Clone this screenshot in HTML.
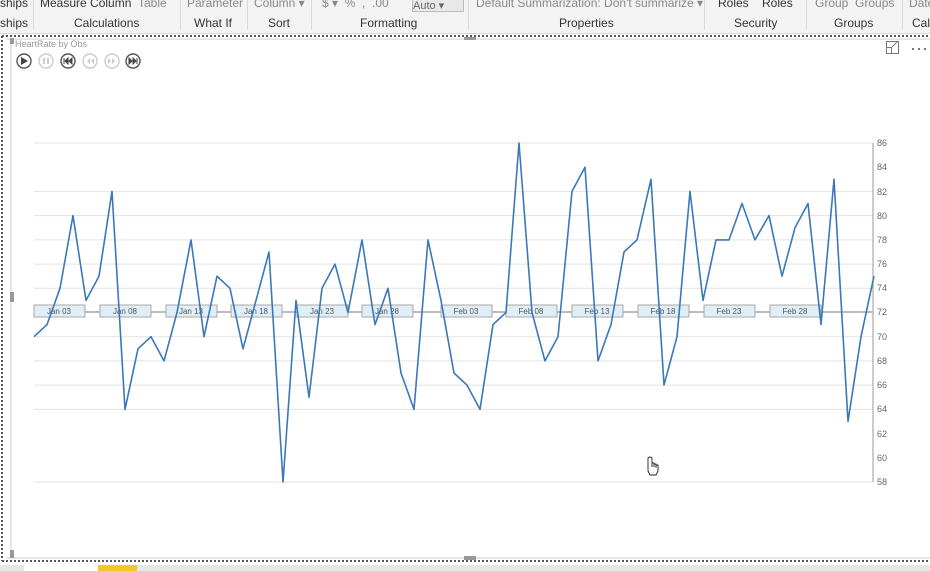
<!DOCTYPE html>
<html><head><meta charset="utf-8"><style>
body{margin:0;width:930px;height:571px;overflow:hidden;background:#fff;font-family:"Liberation Sans",sans-serif;position:relative}
.rib{position:absolute;left:0;top:0;width:930px;height:33px;background:#f3f3f3;border-bottom:1px solid #d6d6d6}
.t{position:absolute;font-size:12px;color:#333;white-space:nowrap}
.g{color:#888}
.sep{position:absolute;top:0;width:1px;height:30px;background:#dadada}
</style></head><body>
<div class="rib">
<div class="t" style="left:0;top:-4px">ships</div>
<div class="t" style="left:40px;top:-4px">Measure Column</div>
<div class="t g" style="left:138px;top:-4px">Table</div>
<div class="t g" style="left:187px;top:-4px">Parameter</div>
<div class="t g" style="left:254px;top:-4px">Column ▾</div>
<div class="t g" style="left:322px;top:-4px">$ ▾ &nbsp;% &nbsp;, &nbsp;.00</div>
<div style="position:absolute;left:412px;top:-2px;width:50px;height:12px;border:1px solid #bbb;background:#e8e8e8;font-size:11px;color:#666">Auto ▾</div>
<div class="t g" style="left:476px;top:-4px">Default Summarization: Don't summarize ▾</div>
<div class="t" style="left:718px;top:-4px">Roles &nbsp;&nbsp;&nbsp;Roles</div>
<div class="t g" style="left:815px;top:-4px">Group &nbsp;Groups</div>
<div class="t g" style="left:909px;top:-4px">Date</div>
<div class="t" style="left:0;top:16px">ships</div>
<div class="t" style="left:74px;top:16px">Calculations</div>
<div class="t" style="left:194px;top:16px">What If</div>
<div class="t" style="left:268px;top:16px">Sort</div>
<div class="t" style="left:360px;top:16px">Formatting</div>
<div class="t" style="left:559px;top:16px">Properties</div>
<div class="t" style="left:734px;top:16px">Security</div>
<div class="t" style="left:834px;top:16px">Groups</div>
<div class="t" style="left:912px;top:16px">Cal</div>
<div class="sep" style="left:33px"></div><div class="sep" style="left:180px"></div><div class="sep" style="left:247px"></div><div class="sep" style="left:311px"></div><div class="sep" style="left:468px"></div><div class="sep" style="left:704px"></div><div class="sep" style="left:806px"></div><div class="sep" style="left:902px"></div>
</div>
<div style="position:absolute;left:0;top:565px;width:930px;height:6px;background:#e8e8e8"></div>
<div style="position:absolute;left:24px;top:565px;width:74px;height:6px;background:#fff"></div>
<div style="position:absolute;left:98px;top:565px;width:39px;height:6px;background:#f0c929"></div>
<svg width="930" height="571" style="position:absolute;left:0;top:0" font-family="Liberation Sans,sans-serif">
<g stroke="#555" stroke-width="2" stroke-dasharray="2,2" fill="none">
<line x1="2" y1="36" x2="930" y2="36"/><line x1="2" y1="561" x2="930" y2="561"/><line x1="2" y1="36" x2="2" y2="561"/>
</g>
<line x1="6" y1="39" x2="930" y2="39" stroke="#ccc"/>
<line x1="6" y1="558" x2="930" y2="558" stroke="#ccc"/>
<line x1="11" y1="40" x2="11" y2="556" stroke="#ccc"/>
<rect x="10" y="38" width="4" height="6" fill="#999"/><rect x="10" y="292" width="4" height="10" fill="#999"/><rect x="10" y="550" width="4" height="8" fill="#999"/><rect x="464" y="556" width="12" height="4" fill="#999"/><rect x="464" y="37" width="12" height="3" fill="#999"/>
<text x="15" y="47" font-size="9" fill="#999">HeartRate by Obs</text>
<g stroke-width="1.4" fill="none">
<circle cx="24" cy="61" r="7" stroke="#555"/><circle cx="46" cy="61" r="7" stroke="#ccc"/><circle cx="68" cy="61" r="7" stroke="#555"/><circle cx="90" cy="61" r="7" stroke="#ccc"/><circle cx="112" cy="61" r="7" stroke="#ccc"/><circle cx="133" cy="61" r="7" stroke="#555"/>
</g>
<path d="M21 57L28 61L21 65Z" fill="#444"/>
<rect x="43" y="58" width="2" height="6" fill="#ccc"/><rect x="47" y="58" width="2" height="6" fill="#ccc"/>
<path d="M64 58V64M68 58L65 61L68 64ZM72 58L69 61L72 64Z" fill="#444" stroke="#444"/>
<path d="M90 58L87 61L90 64ZM94 58L91 61L94 64Z" fill="#ccc"/>
<path d="M108 58L111 61L108 64ZM112 58L115 61L112 64Z" fill="#ccc"/>
<path d="M129 58L132 61L129 64ZM133 58L136 61L133 64ZM137 58V64" fill="#444" stroke="#444"/>
<path d="M886.5 53.5h12v-12h-12zM886.5 47.5h5v6M892 47l6-6M895 41.5h3.5v3.5" stroke="#777" fill="none"/>
<g fill="#777"><rect x="912" y="48" width="2" height="2"/><rect x="918" y="48" width="2" height="2"/><rect x="924" y="48" width="2" height="2"/></g>
<g stroke="#e3e3e3">
<line x1="34" x2="873" y1="143" y2="143"/><line x1="34" x2="873" y1="191.4" y2="191.4"/><line x1="34" x2="873" y1="215.6" y2="215.6"/><line x1="34" x2="873" y1="239.9" y2="239.9"/><line x1="34" x2="873" y1="264.1" y2="264.1"/><line x1="34" x2="873" y1="288.3" y2="288.3"/><line x1="34" x2="873" y1="336.7" y2="336.7"/><line x1="34" x2="873" y1="360.9" y2="360.9"/><line x1="34" x2="873" y1="385.1" y2="385.1"/><line x1="34" x2="873" y1="409.4" y2="409.4"/><line x1="34" x2="873" y1="482" y2="482"/>
</g>
<line x1="873" y1="143" x2="873" y2="482" stroke="#999"/>
<g font-size="9" fill="#666">
<text x="877" y="146">86</text><text x="877" y="170">84</text><text x="877" y="195">82</text><text x="877" y="219">80</text><text x="877" y="243">78</text><text x="877" y="267">76</text><text x="877" y="291">74</text><text x="877" y="315">72</text><text x="877" y="340">70</text><text x="877" y="364">68</text><text x="877" y="388">66</text><text x="877" y="412">64</text><text x="877" y="437">62</text><text x="877" y="461">60</text><text x="877" y="485">58</text>
</g>
<line x1="34" y1="312" x2="873" y2="312" stroke="#bbb" stroke-width="2"/>
<g font-size="8" fill="#555" text-anchor="middle">
<g fill="#e0eff5" stroke="#aaa"><rect x="34" y="305" width="51" height="12"/><rect x="100" y="305" width="51" height="12"/><rect x="166" y="305" width="51" height="12"/><rect x="231" y="305" width="51" height="12"/><rect x="297" y="305" width="51" height="12"/><rect x="362" y="305" width="51" height="12"/><rect x="441" y="305" width="51" height="12"/><rect x="506" y="305" width="51" height="12"/><rect x="572" y="305" width="51" height="12"/><rect x="638" y="305" width="51" height="12"/><rect x="704" y="305" width="51" height="12"/><rect x="770" y="305" width="51" height="12"/></g>
<text x="59" y="314">Jan 03</text><text x="125" y="314">Jan 08</text><text x="191" y="314">Jan 13</text><text x="256" y="314">Jan 18</text><text x="322" y="314">Jan 23</text><text x="387" y="314">Jan 28</text><text x="466" y="314">Feb 03</text><text x="531" y="314">Feb 08</text><text x="597" y="314">Feb 13</text><text x="663" y="314">Feb 18</text><text x="729" y="314">Feb 23</text><text x="795" y="314">Feb 28</text>
</g>
<polyline fill="none" stroke="#3a78b9" stroke-width="1.6" stroke-linejoin="round" points="34,336.7 47,324.6 60,288.3 73,215.6 86,300.4 99,276.2 112,191.4 125,409.4 138,348.8 151,336.7 164,360.9 177,312.5 191,239.9 204,336.7 217,276.2 230,288.3 243,348.8 256,300.4 269,252 283,482 296,300.4 309,397.3 322,288.3 335,264.1 348,312.5 362,239.9 375,324.6 388,288.3 401,373 414,409.4 428,239.9 441,300.4 454,373 467,385.1 480,409.4 493,324.6 506,312.5 519,143 532,312.5 545,360.9 558,336.7 572,191.4 585,167.2 598,360.9 611,324.6 624,252 637,239.9 651,179.3 664,385.1 677,336.7 690,191.4 703,300.4 716,239.9 729,239.9 742,203.5 755,239.9 769,215.6 782,276.2 795,227.8 808,203.5 821,324.6 834,179.3 848,421.5 861,336.7 874,276.2"/>
<path d="M648 461v10l2 4h6l2-4v-6h-2v3v-4h-2v3v-4h-2v4v-9q-2-2-4 0z" fill="#fff" stroke="#222" stroke-width="0.9"/>
</svg>
</body></html>
